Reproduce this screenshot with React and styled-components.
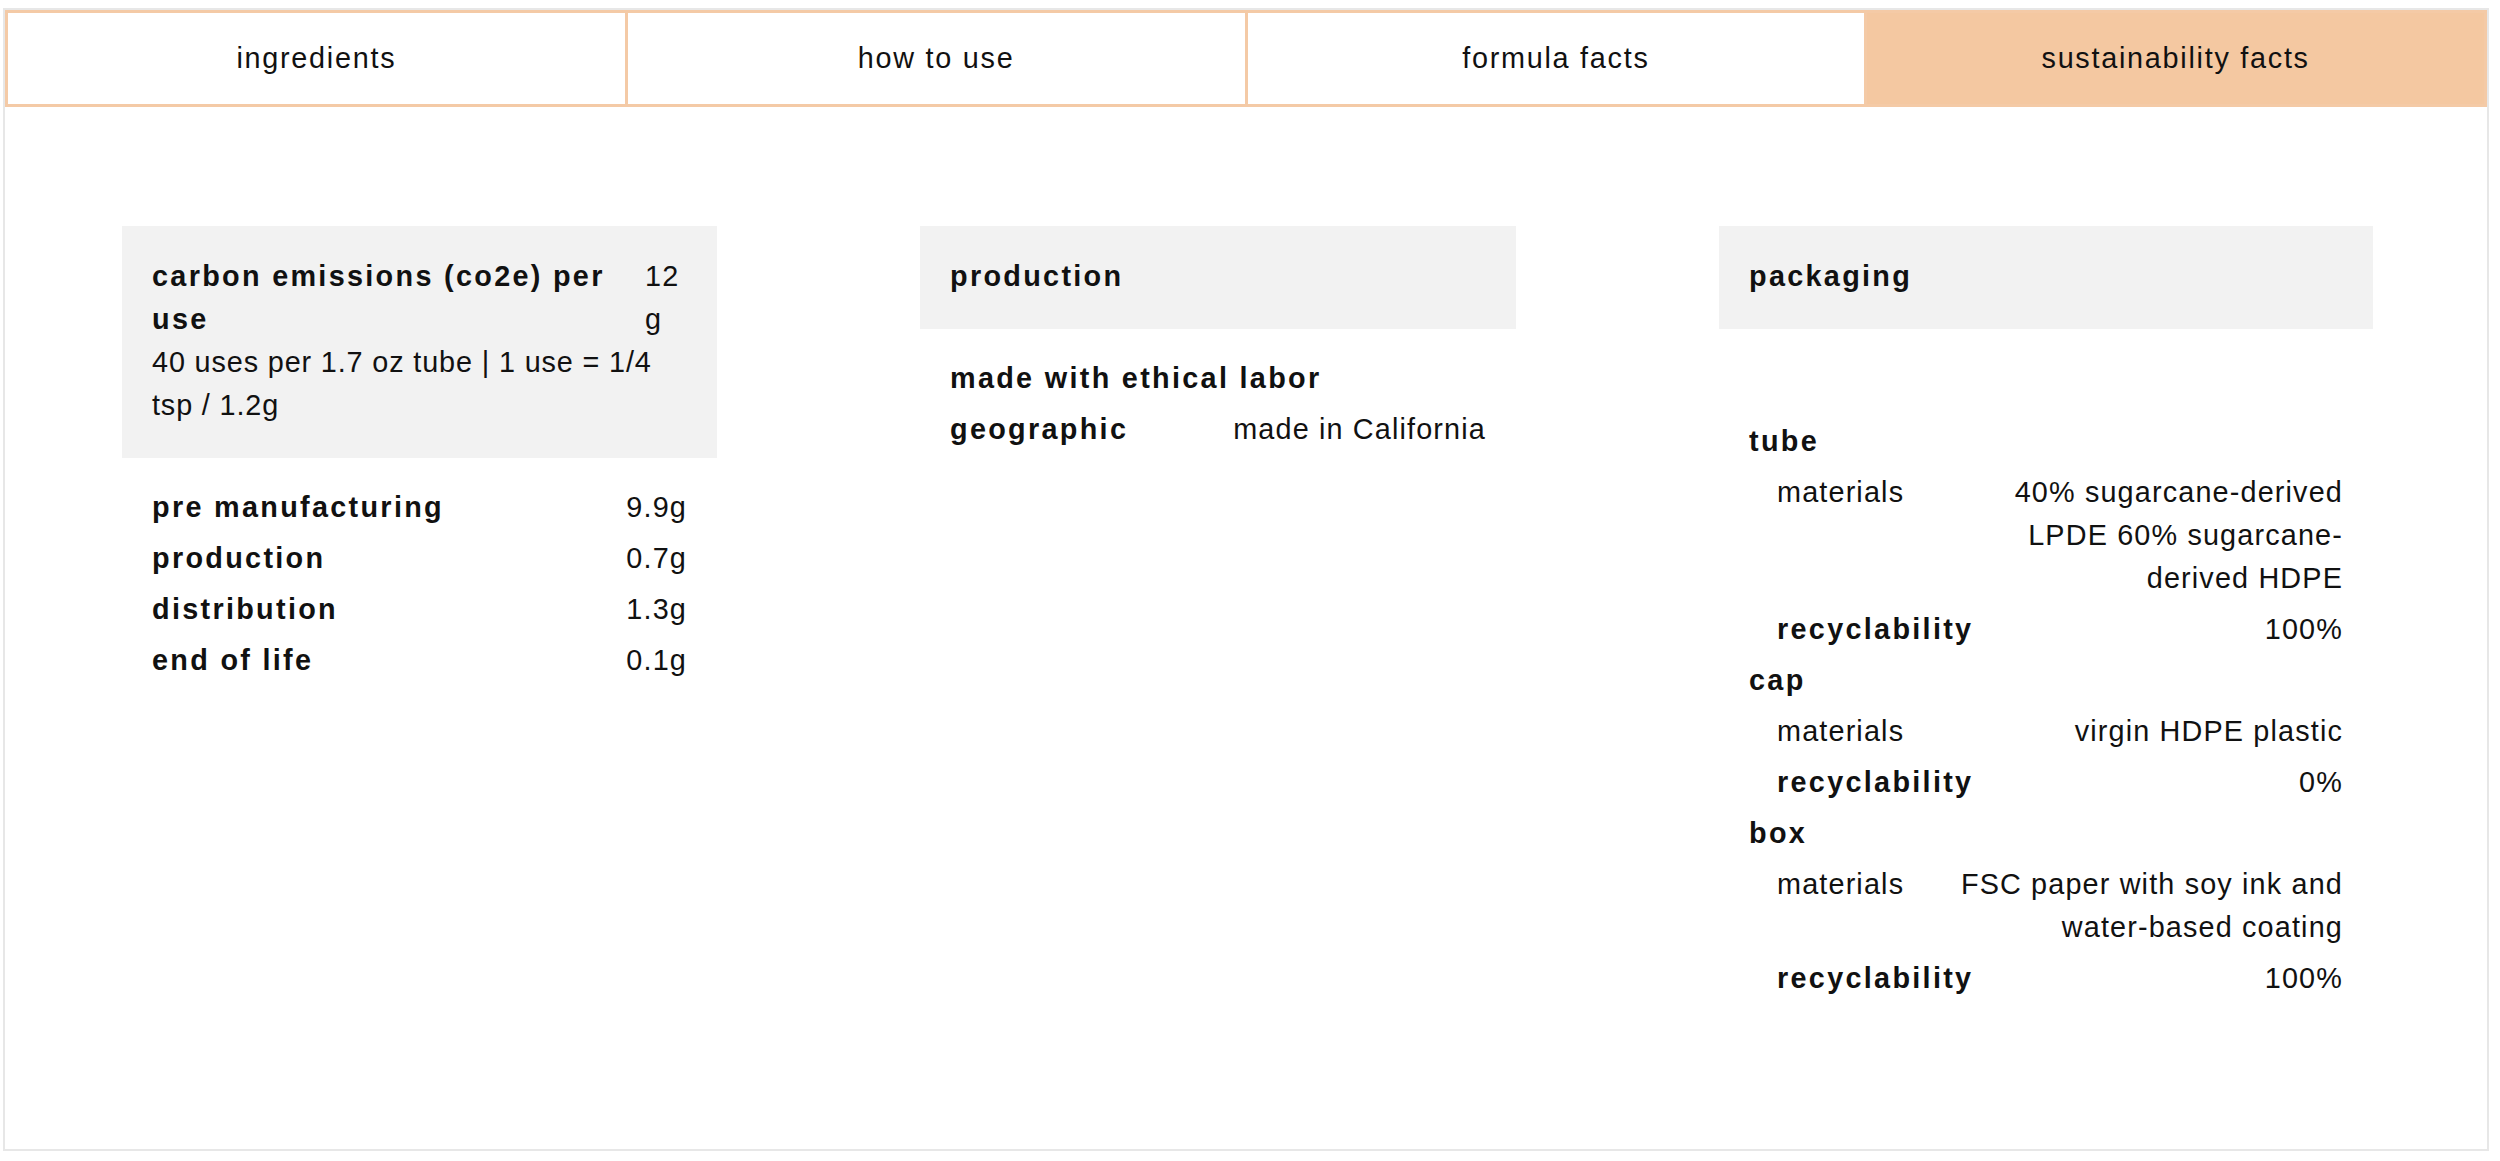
import React from 'react'
import { styled, createGlobalStyle } from 'styled-components'

const GlobalStyle = createGlobalStyle`
body {
  margin: 0;
  background: #fff;
  color: #111;
  font-family: "Liberation Sans", Arial, sans-serif;
}
`;

const tabs = ['ingredients', 'how to use', 'formula facts', 'sustainability facts']

const carbonRows = [
  ['pre manufacturing', '9.9g'],
  ['production', '0.7g'],
  ['distribution', '1.3g'],
  ['end of life', '0.1g'],
]

const packaging = [
  {
    name: 'tube',
    materials: '40% sugarcane-derived LPDE 60% sugarcane-derived HDPE',
    recyclability: '100%',
  },
  { name: 'cap', materials: 'virgin HDPE plastic', recyclability: '0%' },
  {
    name: 'box',
    materials: 'FSC paper with soy ink and water-based coating',
    recyclability: '100%',
  },
]

const App = () => {
  return (
    <>
      <GlobalStyle />
      <Frame>
        <TabBar>
          {tabs.map((t, i) => (
            <Tab key={t} $active={i === tabs.length - 1}>{t}</Tab>
          ))}
        </TabBar>
        <Columns>
          <Card $width={595}>
            <CardHead>
              <HeadRow>
                <HeadLabel>carbon emissions (co2e) per use</HeadLabel>
                <HeadValue>12 g</HeadValue>
              </HeadRow>
              <HeadNote>40 uses per 1.7 oz tube | 1 use = 1/4 tsp / 1.2g</HeadNote>
            </CardHead>
            <List $top={24}>
              {carbonRows.map(([label, value]) => (
                <Row key={label}>
                  <Label>{label}</Label>
                  <Value>{value}</Value>
                </Row>
              ))}
            </List>
          </Card>

          <Card $width={596}>
            <CardHead>
              <HeadLabel>production</HeadLabel>
            </CardHead>
            <List $top={24}>
              <Row>
                <Label>made with ethical labor</Label>
              </Row>
              <Row>
                <Label>geographic</Label>
                <Value>made in California</Value>
              </Row>
            </List>
          </Card>

          <Card $width={654}>
            <CardHead>
              <HeadLabel>packaging</HeadLabel>
            </CardHead>
            <List $top={87}>
              {packaging.map((p) => (
                <React.Fragment key={p.name}>
                  <Row>
                    <Label>{p.name}</Label>
                  </Row>
                  <Row $indent>
                    <Label $regular>materials</Label>
                    <Value>{p.materials}</Value>
                  </Row>
                  <Row $indent>
                    <Label>recyclability</Label>
                    <Value>{p.recyclability}</Value>
                  </Row>
                </React.Fragment>
              ))}
            </List>
          </Card>
        </Columns>
      </Frame>
    </>
  )
}

export default App

const Frame = styled.div`
box-sizing: border-box;
margin: 8px 11px 0 3px;
height: 1143px;
border: 2px solid #e7e7e7;
font-size: 28.8px;
line-height: 43px;
`;

const TabBar = styled.nav`
display: flex;
border: 3px solid #f4caa6;
`;

const Tab = styled.div`
flex: 1;
height: 91px;
display: flex;
align-items: center;
justify-content: center;
letter-spacing: 0.06em;
background: ${(p) => (p.$active ? '#f4c8a1' : '#fff')};
& + & {
  border-left: 3px solid #f4caa6;
}
`;

const Columns = styled.div`
display: flex;
align-items: flex-start;
gap: 203px;
padding: 119px 0 0 117px;
`;

const Card = styled.section`
width: ${(p) => p.$width}px;
flex-shrink: 0;
`;

const CardHead = styled.div`
background: #f2f2f2;
padding: 29px 30px 31px;
`;

const HeadRow = styled.div`
display: flex;
gap: 23px;
`;

const HeadLabel = styled.div`
width: 470px;
flex-shrink: 0;
font-weight: 700;
letter-spacing: 0.08em;
`;

const HeadValue = styled.div`
width: 45px;
letter-spacing: 0.04em;
`;

const HeadNote = styled.div`
letter-spacing: 0.03em;
`;

const List = styled.div`
padding: ${(p) => p.$top}px 30px 0;
`;

const Row = styled.div`
display: flex;
justify-content: space-between;
align-items: flex-start;
gap: 40px;
padding: 4px 0 4px ${(p) => (p.$indent ? 28 : 0)}px;
`;

const Label = styled.div`
flex-shrink: 0;
font-weight: ${(p) => (p.$regular ? 400 : 700)};
letter-spacing: ${(p) => (p.$regular ? '0.04em' : '0.08em')};
`;

const Value = styled.div`
max-width: 390px;
text-align: right;
letter-spacing: 0.04em;
`;
